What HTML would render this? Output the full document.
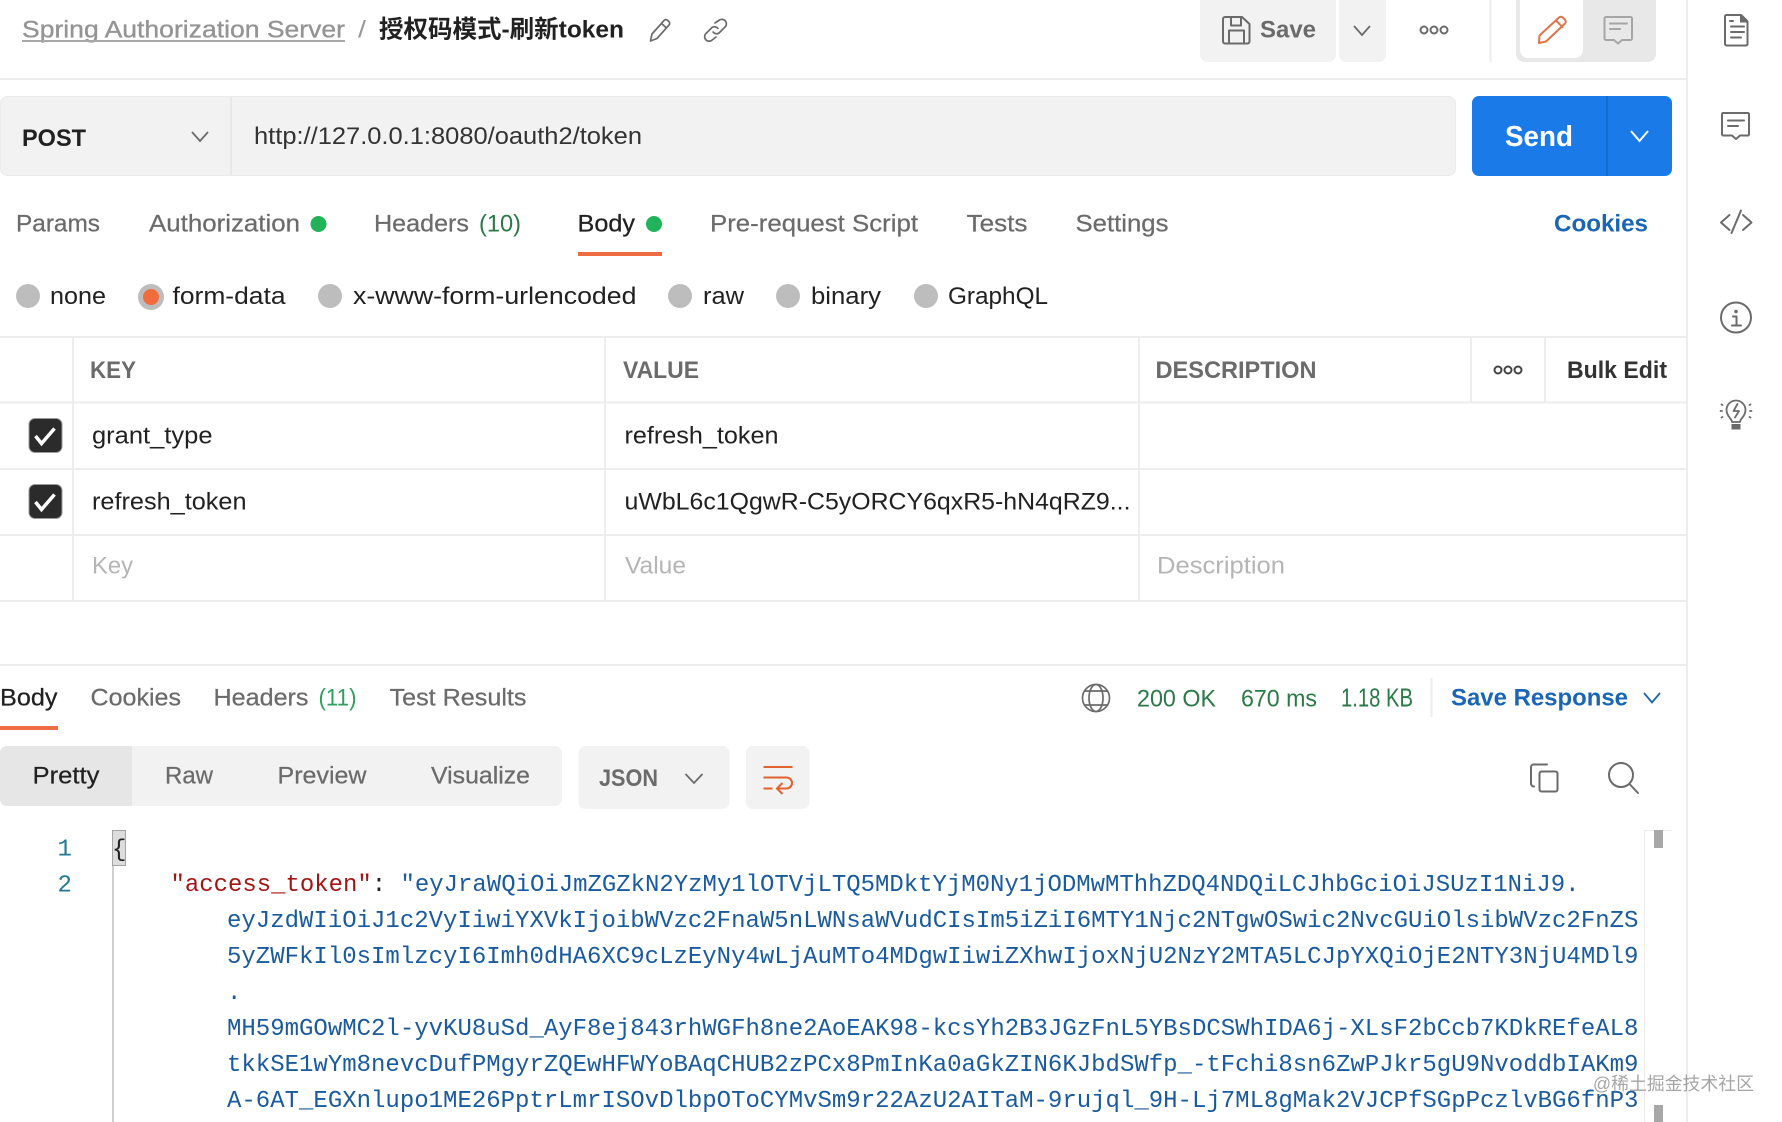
<!DOCTYPE html>
<html lang="zh">
<head>
<meta charset="utf-8">
<title>Spring Authorization Server</title>
<style>
html,body{margin:0;padding:0;background:#fff;width:1782px;height:1122px;overflow:hidden}
svg{display:block;filter:blur(.35px)}
text{font-family:"Liberation Sans","Noto Sans CJK SC",sans-serif;font-size:24.5px;fill:#6b6b6b}
.d{fill:#212121}
.b{font-weight:bold}
.g{fill:#2a7a47}
.bl{fill:#1a65b5;font-weight:bold}
.ph{fill:#b5b5b5}
.t{stroke:#6b6b6b;stroke-width:.25px}
.m{font-family:"Liberation Mono",monospace;font-size:24px;fill:#1a5a9e}
.l{stroke:#ededed;stroke-width:2;fill:none}
.i{stroke:#6b6b6b;stroke-width:2;fill:none;stroke-linecap:round;stroke-linejoin:round}
.c{stroke:#6b6b6b;stroke-width:1.8;fill:none}
</style>
</head>
<body>
<svg width="1782" height="1122" viewBox="0 0 1782 1122" xmlns="http://www.w3.org/2000/svg">
<rect width="1782" height="1122" fill="#fff"/>

<!-- structural lines -->
<path class="l" d="M1687 0V1122"/>
<path class="l" d="M0 79H1687M0 337H1687M0 402.500H1687M0 469H1687M0 535H1687M0 601H1687M0 665H1687"/>
<path class="l" d="M73 337V601M605 337V601M1139 337V601M1471 337V402M1545 337V402"/>

<!-- header -->
<text x="22" y="37.500" textLength="323" lengthAdjust="spacingAndGlyphs" style="fill:#949494;stroke:#949494;stroke-width:.35px">Spring Authorization Server</text>
<rect x="22" y="40" width="323" height="2" fill="#a8a8a8"/>
<text x="358" y="37.500" textLength="8" lengthAdjust="spacingAndGlyphs" style="fill:#999">/</text>
<text class="d b" x="379" y="37.500" textLength="245" lengthAdjust="spacingAndGlyphs">授权码模式-刷新token</text>
<path class="i" style="stroke-width:1.700" d="M650.500 41L652 34L664 20.500A2.400 2.400 0 0 1 667.500 20.300L668.800 21.500A2.400 2.400 0 0 1 669 25L657 38.500ZM661.500 23.500L666.500 28"/>
<path class="i" style="stroke-width:1.700" d="M715 23L719.500 20A4.500 4.500 0 0 1 725.500 26.500L719 33A4.500 4.500 0 0 1 713 32M716 37L711.500 40.500A4.500 4.500 0 0 1 705.500 34L712 27.500A4.500 4.500 0 0 1 718 28.500"/>

<rect x="1200" y="-8" width="136" height="70" rx="7" fill="#f2f2f2"/>
<rect x="1339" y="-8" width="47" height="70" rx="7" fill="#f2f2f2"/>
<path class="i" d="M1225 17H1242L1249.500 24V41.500A2 2 0 0 1 1247.500 43.500H1225A2 2 0 0 1 1223 41.500V19A2 2 0 0 1 1225 17ZM1231 17V25.500H1241V17M1229 43.500V30.500H1244V43.500"/>
<text class="b" x="1260" y="37.500" textLength="56" lengthAdjust="spacingAndGlyphs">Save</text>
<path class="c" d="M1354 26L1362 35L1370 26"/>
<g class="i"><circle cx="1424" cy="30" r="3.500"/><circle cx="1434" cy="30" r="3.500"/><circle cx="1444" cy="30" r="3.500"/></g>
<path class="l" d="M1490.500 0V62"/>
<rect x="1516" y="-8" width="140" height="70" rx="8" fill="#e8e8e8"/>
<rect x="1520" y="-6" width="63" height="64" rx="8" fill="#fff"/>
<path class="i" style="stroke:#e2734a" d="M1539 43L1539.500 35.500L1559 17.500A2.800 2.800 0 0 1 1563 17.700L1565 19.700A2.800 2.800 0 0 1 1565 23.500L1546 41.500ZM1556 20.500L1562.500 27"/>
<path class="i" style="stroke:#a6a6a6" d="M1606 17H1630.500A1.500 1.500 0 0 1 1632 18.500V38.500A1.500 1.500 0 0 1 1630.500 40H1622L1618 43.500L1614 40H1606A1.500 1.500 0 0 1 1604.500 38.500V18.500A1.500 1.500 0 0 1 1606 17ZM1610 23.500H1627M1610 29H1620"/>

<!-- right sidebar icons -->
<path class="i" d="M1726.500 15H1741L1747.500 21.500V44A1.500 1.500 0 0 1 1746 45.500H1726.500A1.500 1.500 0 0 1 1725 44V16.500A1.500 1.500 0 0 1 1726.500 15ZM1730 21H1733M1731 26.500H1744M1731 32H1744M1731 37.500H1741"/>
<path d="M1740 14.500H1742L1748 20.500V22.500H1740Z" fill="#6b6b6b"/>
<path class="i" d="M1723 113H1748A1.500 1.500 0 0 1 1749 114.500V134.500A1.500 1.500 0 0 1 1747.500 135.500H1740L1736 139L1732 135.500H1723A1.500 1.500 0 0 1 1722 134.500V114.500A1.500 1.500 0 0 1 1723 113ZM1728 120.500H1744M1728 126H1738"/>
<path class="i" d="M1729.500 215L1721 222.500L1729.500 230M1741 210.500L1731.500 233M1743 215L1751.500 222.500L1743 230"/>
<circle class="i" cx="1736" cy="317.500" r="15"/>
<circle cx="1736" cy="311.500" r="1.800" fill="#6b6b6b"/>
<path class="i" d="M1733 316.500H1736.500V325M1732 325.500H1741"/>
<path class="i" style="stroke-width:1.800" d="M1732 422C1732 418.500 1726.500 416.500 1726.500 410A9.500 9.500 0 0 1 1745.500 410C1745.500 416.500 1740 418.500 1740 422ZM1737.500 404L1733.500 411H1739L1735 417.500"/>
<path d="M1731.500 424H1740.500V429.500H1731.500Z" fill="#6b6b6b"/>
<path class="i" style="stroke-width:1.800" d="M1721.500 404.500L1722.500 405M1720.500 411H1722M1721.500 417.500L1722.500 417M1750.500 404.500L1749.500 405M1751.500 411H1750M1750.500 417.500L1749.500 417"/>

<!-- url bar -->
<rect x="0.500" y="96.500" width="1455" height="79" rx="7" fill="#f2f2f2" stroke="#ebebeb"/>
<path d="M231 97V175" stroke="#e8e8e8" stroke-width="2"/>
<text class="d b" x="22" y="146" textLength="64" lengthAdjust="spacingAndGlyphs">POST</text>
<path class="c" d="M192 132L200 141L208 132"/>
<text x="254" y="144" textLength="388" lengthAdjust="spacingAndGlyphs" style="fill:#333">http://127.0.0.1:8080/oauth2/token</text>
<rect x="1472" y="96" width="200" height="80" rx="7" fill="#1a7ae8"/>
<path d="M1607 96V176" stroke="#1568c9" stroke-width="1.500"/>
<text class="b" x="1505" y="146" textLength="68" lengthAdjust="spacingAndGlyphs" style="fill:#fff;font-size:29px">Send</text>
<path d="M1631 131L1639.500 141L1648 131" stroke="#fff" stroke-width="2" fill="none"/>

<!-- request tabs -->
<text class="t" x="16" y="231.500" textLength="84" lengthAdjust="spacingAndGlyphs">Params</text>
<text class="t" x="149" y="231.500" textLength="151" lengthAdjust="spacingAndGlyphs">Authorization</text>
<circle cx="318.500" cy="224" r="8" fill="#21b35a"/>
<text class="t" x="374" y="231.500" textLength="95" lengthAdjust="spacingAndGlyphs">Headers</text>
<text class="g" x="479" y="231.500" textLength="42" lengthAdjust="spacingAndGlyphs">(10)</text>
<text class="d" x="577.500" y="231.500" textLength="57.500" lengthAdjust="spacingAndGlyphs" style="stroke:#212121;stroke-width:.25px">Body</text>
<circle cx="654" cy="224" r="8" fill="#21b35a"/>
<rect x="578" y="252" width="84" height="4" fill="#ef6c43"/>
<text class="t" x="710" y="231.500" textLength="208" lengthAdjust="spacingAndGlyphs">Pre-request Script</text>
<text class="t" x="966.500" y="231.500" textLength="61" lengthAdjust="spacingAndGlyphs">Tests</text>
<text class="t" x="1075.500" y="231.500" textLength="93" lengthAdjust="spacingAndGlyphs">Settings</text>
<text class="bl" x="1554" y="231.500" textLength="94" lengthAdjust="spacingAndGlyphs">Cookies</text>

<!-- body type radios -->
<g fill="#bdbdbd">
<circle cx="28" cy="296" r="12"/>
<circle cx="151" cy="297" r="13"/>
<circle cx="330" cy="296" r="12"/>
<circle cx="680" cy="296" r="12"/>
<circle cx="788" cy="296" r="12"/>
<circle cx="926" cy="296" r="12"/>
</g>
<circle cx="151" cy="297" r="8" fill="#f26b3a"/>
<text class="d" x="50" y="304" textLength="56" lengthAdjust="spacingAndGlyphs">none</text>
<text class="d" x="172.500" y="304" textLength="113" lengthAdjust="spacingAndGlyphs">form-data</text>
<text class="d" x="353" y="304" textLength="283.500" lengthAdjust="spacingAndGlyphs">x-www-form-urlencoded</text>
<text class="d" x="703" y="304" textLength="41" lengthAdjust="spacingAndGlyphs">raw</text>
<text class="d" x="811" y="304" textLength="70" lengthAdjust="spacingAndGlyphs">binary</text>
<text class="d" x="948" y="304" textLength="100" lengthAdjust="spacingAndGlyphs">GraphQL</text>

<!-- table -->
<text class="b" x="90" y="378" textLength="46" lengthAdjust="spacingAndGlyphs">KEY</text>
<text class="b" x="623" y="378" textLength="76" lengthAdjust="spacingAndGlyphs">VALUE</text>
<text class="b" x="1155.500" y="378" textLength="161" lengthAdjust="spacingAndGlyphs">DESCRIPTION</text>
<g class="i" style="stroke:#444"><circle cx="1498" cy="370" r="3.500"/><circle cx="1508" cy="370" r="3.500"/><circle cx="1518" cy="370" r="3.500"/></g>
<text class="b" x="1567" y="378" textLength="100" lengthAdjust="spacingAndGlyphs" style="fill:#333">Bulk Edit</text>

<rect x="29" y="418.500" width="33" height="34" rx="6" fill="#2b2b2b" stroke="#9a9a9a"/>
<path d="M35.500 436L41.500 443.500L54.500 428.500" stroke="#fff" stroke-width="3.500" fill="none"/>
<rect x="29" y="484.500" width="33" height="34" rx="6" fill="#2b2b2b" stroke="#9a9a9a"/>
<path d="M35.500 502L41.500 509.500L54.500 494.500" stroke="#fff" stroke-width="3.500" fill="none"/>

<text class="d" x="92" y="443.500" textLength="120.500" lengthAdjust="spacingAndGlyphs">grant_type</text>
<text class="d" x="624.500" y="443.500" textLength="154" lengthAdjust="spacingAndGlyphs">refresh_token</text>
<text class="d" x="92" y="509.500" textLength="154.500" lengthAdjust="spacingAndGlyphs">refresh_token</text>
<text class="d" x="624.500" y="509.500" textLength="506" lengthAdjust="spacingAndGlyphs">uWbL6c1QgwR-C5yORCY6qxR5-hN4qRZ9...</text>
<text class="ph" x="92" y="573.500" textLength="41" lengthAdjust="spacingAndGlyphs">Key</text>
<text class="ph" x="625" y="573.500" textLength="61" lengthAdjust="spacingAndGlyphs">Value</text>
<text class="ph" x="1157" y="573.500" textLength="128" lengthAdjust="spacingAndGlyphs">Description</text>

<!-- response tabs -->
<text class="d" x="0" y="705.500" textLength="57.500" lengthAdjust="spacingAndGlyphs" style="stroke:#212121;stroke-width:.25px">Body</text>
<rect x="0" y="726" width="58" height="4" fill="#ef6c43"/>
<text class="t" x="90.500" y="705.500" textLength="90.500" lengthAdjust="spacingAndGlyphs">Cookies</text>
<text class="t" x="213.500" y="705.500" textLength="95" lengthAdjust="spacingAndGlyphs">Headers</text>
<text class="g" x="318.500" y="705.500" textLength="38" lengthAdjust="spacingAndGlyphs" style="fill:#2f9e5f">(11)</text>
<text class="t" x="389.500" y="705.500" textLength="137" lengthAdjust="spacingAndGlyphs">Test Results</text>

<g class="i" style="stroke-width:1.700"><circle cx="1096" cy="698" r="13.500"/><ellipse cx="1096" cy="698" rx="7" ry="13.500"/><path d="M1084.500 691H1107.500M1084.500 705H1107.500"/></g>
<text class="g" x="1137" y="706.500" textLength="79" lengthAdjust="spacingAndGlyphs">200 OK</text>
<text class="g" x="1241" y="706.500" textLength="76" lengthAdjust="spacingAndGlyphs">670 ms</text>
<text class="g" x="1341" y="706.500" textLength="72" lengthAdjust="spacingAndGlyphs" style="font-size:25.500px">1.18 KB</text>
<path class="l" d="M1431.500 678V717"/>
<text class="bl" x="1451" y="705.500" textLength="177" lengthAdjust="spacingAndGlyphs">Save Response</text>
<path d="M1644 693L1652 702.500L1660 693" stroke="#1a65b5" stroke-width="1.800" fill="none"/>

<!-- response toolbar -->
<rect x="0" y="746" width="562" height="60" rx="7" fill="#f2f2f2"/>
<path d="M7 746H132V806H7A7 7 0 0 1 0 799V753A7 7 0 0 1 7 746Z" fill="#e6e6e6"/>
<text class="d" x="32.500" y="783.500" textLength="67" lengthAdjust="spacingAndGlyphs" style="stroke:#212121;stroke-width:.2px">Pretty</text>
<text class="t" x="165" y="783.500" textLength="48" lengthAdjust="spacingAndGlyphs">Raw</text>
<text class="t" x="277.500" y="783.500" textLength="89" lengthAdjust="spacingAndGlyphs">Preview</text>
<text class="t" x="431" y="783.500" textLength="99" lengthAdjust="spacingAndGlyphs">Visualize</text>
<rect x="578.500" y="746" width="151" height="63" rx="7" fill="#f2f2f2"/>
<text class="b" x="599" y="786" textLength="59" lengthAdjust="spacingAndGlyphs">JSON</text>
<path class="c" d="M685.500 774L694 783L702.500 774"/>
<rect x="746" y="746" width="63.500" height="63" rx="7" fill="#f2f2f2"/>
<path d="M763.500 767H792.500M763.500 777.500H786.500A5.500 5.500 0 0 1 786.500 788.500H777.500M782.500 783L777 788.500L782.500 794M763.500 788.500H772.500" stroke="#e2622f" stroke-width="2" fill="none"/>
<path class="i" d="M1534 786.500A3 3 0 0 1 1531 783.500V767A2.500 2.500 0 0 1 1533.500 764.500H1547"/>
<rect class="i" x="1539.500" y="771.500" width="18" height="20" rx="2"/>
<circle class="i" cx="1621" cy="775" r="12"/>
<path class="i" d="M1629.500 784L1638 793"/>

<!-- code -->
<text class="m" x="57.500" y="855.500" style="fill:#237893">1</text>
<text class="m" x="57.500" y="891.500" style="fill:#237893">2</text>
<path d="M113 866V1122" stroke="#cfcfcf" stroke-width="2"/>
<rect x="112.500" y="830.500" width="13" height="35" fill="#ddd" stroke="#a5a5a5"/>
<text class="m" x="112" y="856" style="fill:#222">{</text>
<text class="m" x="170.500" y="891" textLength="1409" lengthAdjust="spacingAndGlyphs" xml:space="preserve"><tspan style="fill:#a31515">"access_token"</tspan><tspan style="fill:#222">: </tspan>"eyJraWQiOiJmZGZkN2YzMy1lOTVjLTQ5MDktYjM0Ny1jODMwMThhZDQ4NDQiLCJhbGciOiJSUzI1NiJ9.</text>
<text class="m" x="227" y="927">eyJzdWIiOiJ1c2VyIiwiYXVkIjoibWVzc2FnaW5nLWNsaWVudCIsIm5iZiI6MTY1Njc2NTgwOSwic2NvcGUiOlsibWVzc2FnZS</text>
<text class="m" x="227" y="963">5yZWFkIl0sImlzcyI6Imh0dHA6XC9cLzEyNy4wLjAuMTo4MDgwIiwiZXhwIjoxNjU2NzY2MTA5LCJpYXQiOjE2NTY3NjU4MDl9</text>
<text class="m" x="227" y="999">.</text>
<text class="m" x="227" y="1035">MH59mGOwMC2l-yvKU8uSd_AyF8ej843rhWGFh8ne2AoEAK98-kcsYh2B3JGzFnL5YBsDCSWhIDA6j-XLsF2bCcb7KDkREfeAL8</text>
<text class="m" x="227" y="1071">tkkSE1wYm8nevcDufPMgyrZQEwHFWYoBAqCHUB2zPCx8PmInKa0aGkZIN6KJbdSWfp_-tFchi8sn6ZwPJkr5gU9NvoddbIAKm9</text>
<text class="m" x="227" y="1107">A-6AT_EGXnlupo1ME26PptrLmrISOvDlbpOToCYMvSm9r22AzU2AITaM-9rujql_9H-Lj7ML8gMak2VJCPfSGpPczlvBG6fnP3</text>

<!-- scrollbar -->
<path d="M1644.500 830V1122M1644 830.500H1672" stroke="#ececec" fill="none"/>
<rect x="1654" y="830" width="9" height="18" fill="#a8a8a8"/>
<rect x="1654" y="1105" width="9" height="17" fill="#a8a8a8"/>

<!-- watermark -->
<text x="1593" y="1090" textLength="161" lengthAdjust="spacingAndGlyphs" style="font-size:18px;fill:#8f8f8f;opacity:.8">@稀土掘金技术社区</text>
</svg>
</body>
</html>
